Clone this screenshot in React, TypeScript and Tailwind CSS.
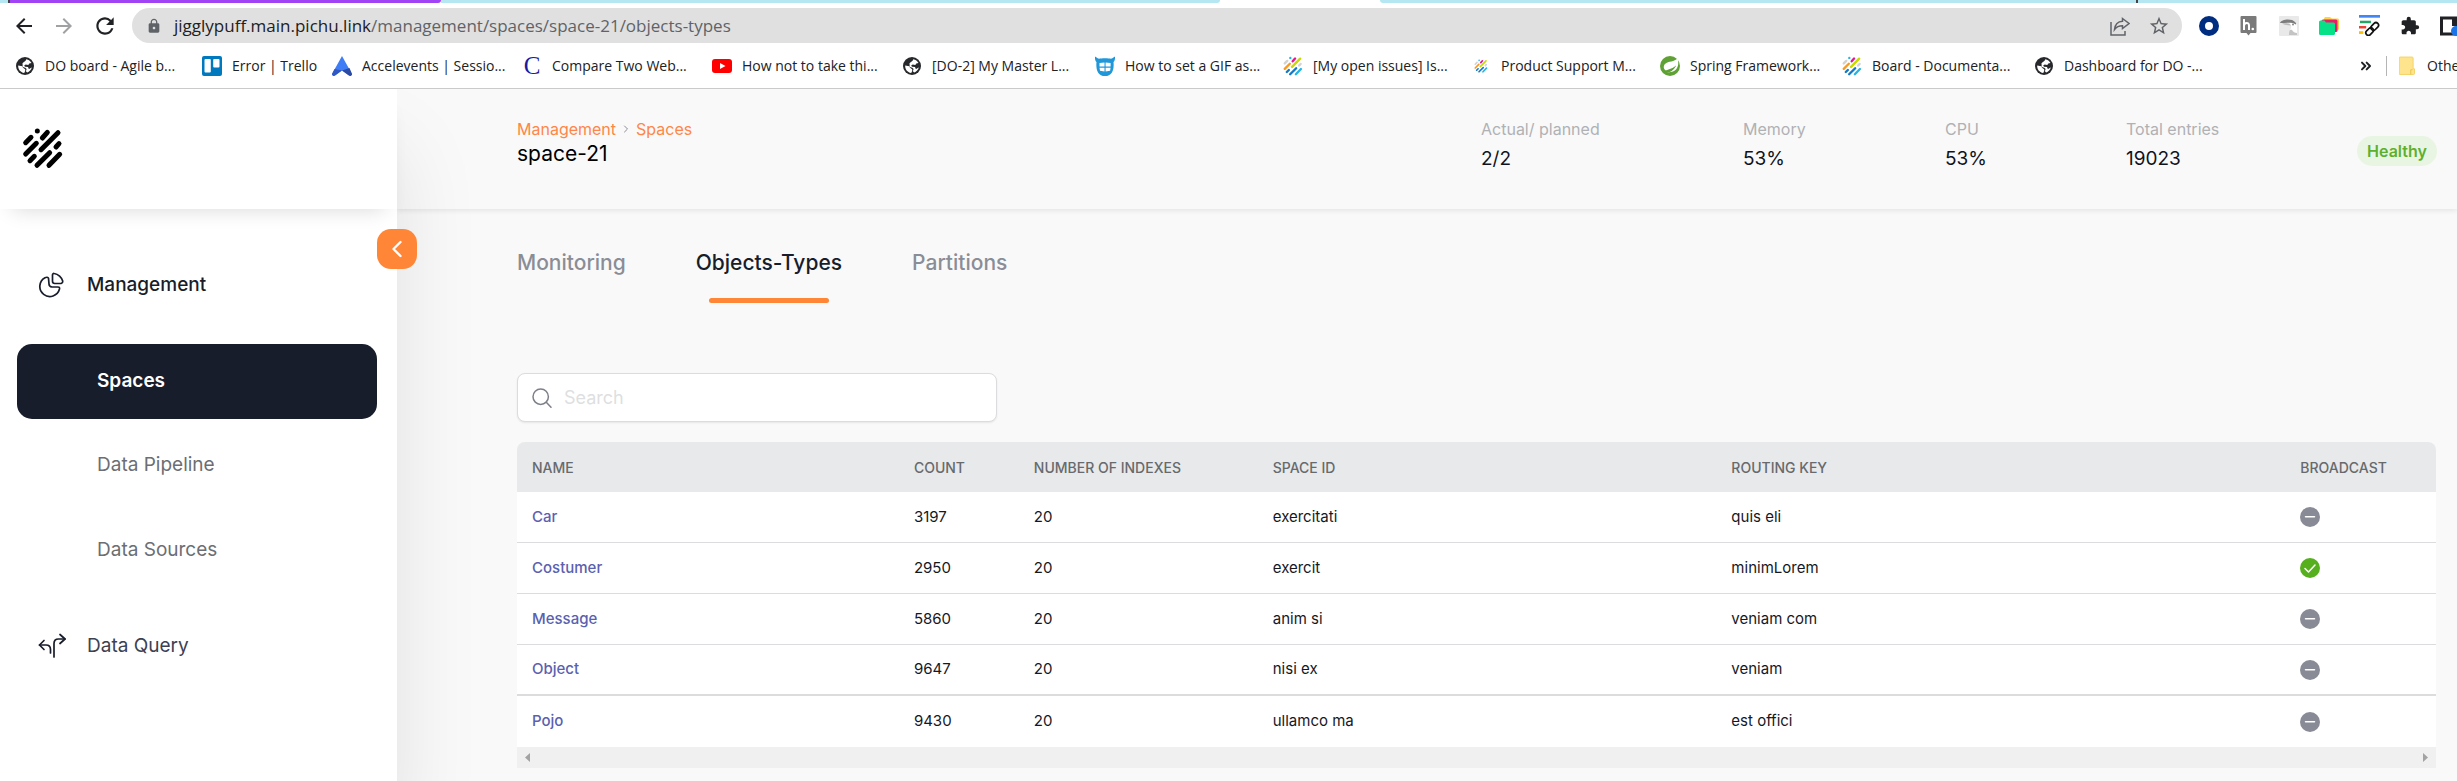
import React from "react";
import { ChevronLeft, ChevronRight, ChevronsRight } from "lucide-react";
import { MdArrowBack, MdArrowForward, MdExtension, MdLock, MdRefresh, MdStarBorder } from "react-icons/md";

const STRIPES = [
  { d: "M112 93h.01", color: "#22b5e8" },
  { d: "M77 128L93 112", color: "#d3d3d3" },
  { d: "M127 114L142 97", color: "#e6168b" },
  { d: "M77 162L109 130", color: "#f79a1f" },
  { d: "M123 149L174 98", color: "#c8d900" },
  { d: "M168 141L177 131", color: "#d3d3d3" },
  { d: "M90 182L103 169", color: "#1479c4" },
  { d: "M111 196L149 158", color: "#1479c4" },
  { d: "M147 196L179 163", color: "#22b5e8" },
];

function StripesLogo({ className, mono = false }: { className: string; mono?: boolean }) {
  return (
    <svg viewBox="66 81 126 126" className={className} fill="none" strokeWidth="15" strokeLinecap="round" aria-hidden="true">
      {STRIPES.map((s) => (
        <path key={s.d} d={s.d} stroke={mono ? "#000000" : s.color} />
      ))}
    </svg>
  );
}

function GlobeIcon() {
  return (
    <svg viewBox="0 0 18 18" className="size-[18px]" aria-hidden="true">
      <circle cx="9" cy="9" r="9" fill="#26282b" />
      <path d="M2.200 8.500c-.4 3.600 2.200 7 6 7.500L9.200 14v-1.800L7 10.700l-.6-1.500z" fill="#fff" />
      <path d="M6.500 6.200C8 4.800 9.500 4.600 10.300 2.200c2.300.4 4.200 1.800 5.200 3.800l-2.200.6-1 1.500-2.600-.5-1.500 1 .8 1.200 3 .3.800 2c1.300-.4 2-1.600 3-1.700-.6 2.300-2.400 4.300-4.600 5.100l-1.300-1.200.7-2.300-1.300-1.300-2.600-.8z" fill="#fff" />
    </svg>
  );
}

function SpringIcon() {
  return (
    <svg viewBox="0 0 20 20" className="size-5" aria-hidden="true">
      <circle cx="10" cy="10" r="10" fill="#5fa134" />
      <path d="M17.500 2c1.500 5 .8 9-1.500 11.500-3 3.300-7.500 2.500-11.500 3.200C9 16.500 14 14 16 9.500 13.500 12.500 9 13 6 14.500 3.500 13.500 3 10 5 8c3.500-3.300 9.500-1.500 12.500-6z" fill="#fff" />
      <path d="M4.500 16.700c5 .3 9.500-2.200 11.500-7.200-3 4-8 4.500-12 6z" fill="#5fa134" />
    </svg>
  );
}

function TrelloIcon() {
  return (
    <svg viewBox="0 0 20 20" className="size-5" aria-hidden="true">
      <rect width="20" height="20" rx="2" fill="#0079bf" />
      <rect x="2.500" y="3" width="6.300" height="13.500" rx="1" fill="#fff" />
      <rect x="11.200" y="3" width="6.300" height="8.500" rx="1" fill="#fff" />
    </svg>
  );
}

function AccelIcon() {
  return (
    <svg viewBox="0 0 20 20" className="size-5" aria-hidden="true">
      <path d="M10 0L20 18c0 1.500-1.500 2.500-3 1.500L10 14.500 3 19.500C1.500 20.500 0 19.500 0 18z" fill="#3f7df6" />
      <path d="M10 14.500L17.500 12 20 18c0 1.500-1.500 2.500-3 1.500z" fill="#2a4aa3" />
      <path d="M10 14.500L2.500 13 0 18c0 1.500 1.500 2.500 3 1.500z" fill="#3058c4" />
    </svg>
  );
}

function YoutubeIcon() {
  return (
    <svg viewBox="0 0 20 20" className="size-5" aria-hidden="true">
      <rect y="3" width="20" height="14" rx="3" fill="#ff0000" />
      <path d="M8 7l5.500 3L8 13z" fill="#fff" />
    </svg>
  );
}

function GifIcon() {
  return (
    <svg viewBox="0 0 20 20" className="size-5" aria-hidden="true">
      <path d="M0 .5c1 .2 2 2 4 2.200C6 2 14 2 16 2.700 18 2.500 19 .7 20 .5c.3 2-.3 4.500-1.500 5.500.8 8-1.500 14-8.500 14S.7 14 1.500 6C.3 5-.3 2.500 0 .5z" fill="#1f97d8" />
      <path d="M4.500 7l5-.6v4.200h-5zM10.600 6.400l5 .6v3.600h-5zM4.500 11.700h5v3.800l-4.500-.7zM10.600 11.700h5l-.5 3.100-4.500.7z" fill="#fff" />
    </svg>
  );
}

function ShareIcon() {
  return (
    <svg viewBox="0 0 20 20" className="size-5" fill="none" stroke="#5f6368" strokeWidth="1.500" aria-hidden="true">
      <path d="M1 6v13h14v-4" />
      <path d="M12.500 2.500l6.500 5-6.500 5V9.800c-3.500 0-6 1-8 3.700.5-4.500 3-8 8-8.300z" />
    </svg>
  );
}

function HypothesisIcon() {
  return (
    <svg viewBox="0 0 20 20" className="size-5" aria-hidden="true">
      <path d="M2.500 0h14a1 1 0 011 1v15a1 1 0 01-1 1h-5l-2 2.500-2-2.500h-5a1 1 0 01-1-1V1a1 1 0 011-1z" fill="#7a7a7a" />
      <path d="M5 3v11M5 9.500c.5-3 5-3.500 5 0V14" stroke="#fff" strokeWidth="2" fill="none" />
      <circle cx="13.800" cy="13" r="1.300" fill="#fff" />
    </svg>
  );
}

function ToucanIcon() {
  return (
    <svg viewBox="0 0 20 20" className="size-5" aria-hidden="true">
      <rect width="20" height="20" rx="1" fill="#e9e9e9" />
      <path d="M10 8c3-3 8-3 8 2v8c-4 1-8-1-7-4 1-2 2-3 .500-5z" fill="#fff" />
      <path d="M1 7c1-4 12-5 15-1 2 2 1 3 0 2-3-2-8-1-15-1z" fill="#7d7d7d" />
      <path d="M3 7.500c4-.5 8-.5 9 2-3-.5-6 0-9-2z" fill="#b9b9b9" />
      <circle cx="14" cy="8.500" r="1" fill="#888" />
      <path d="M10 19c0-5 1-6 3-5 1 2 3 3 5 3v2z" fill="#c4c4c4" />
    </svg>
  );
}

function FoldersIcon() {
  return (
    <svg viewBox="0 0 20 20" className="size-5" aria-hidden="true">
      <path d="M6 1h5l2 1.500h6A1.500 1.500 0 0120 4v8.500a1.500 1.500 0 01-1.500 1.500H5V2.500z" fill="#fbd44c" />
      <rect x="2.500" y="3.500" width="16" height="12.500" rx="1.500" fill="#ec1c64" />
      <path d="M1.500 4.500h4l1.500 2h7.500A1.500 1.500 0 0116 8v9.500a1.500 1.500 0 01-1.500 1.500h-13A1.500 1.500 0 010 17.500V6a1.500 1.500 0 011.500-1.500z" fill="#05e186" />
    </svg>
  );
}

function LinkBarsIcon() {
  return (
    <svg viewBox="0 0 22 22" className="size-[21px]" aria-hidden="true">
      <rect x="0" y="0" width="22" height="2.800" fill="#4285f4" />
      <rect x="1" y="6" width="11.500" height="2.600" fill="#23a566" />
      <rect x="0" y="11.500" width="7.500" height="2.600" fill="#ea4335" />
      <rect x="0" y="17" width="4.500" height="2.800" fill="#fbbc04" />
      <g fill="none" stroke="#111" strokeWidth="1.800" transform="rotate(-45 14 14.500)">
        <rect x="5.500" y="11.800" width="9" height="5.400" rx="2.700" />
        <rect x="13" y="11.800" width="9" height="5.400" rx="2.700" />
      </g>
    </svg>
  );
}

function FolderIcon() {
  return (
    <svg viewBox="0 0 17 20" className="h-5 w-4 shrink-0" aria-hidden="true">
      <path d="M1 .5h13a1 1 0 011 1V13h1.500v5a1 1 0 01-1 1H1a.8.8 0 01-.8-.8V1.300A.8.8 0 011 .5z" fill="#ffe48e" stroke="#f2d264" />
      <path d="M12.500 19v-5h2" fill="none" stroke="#e8c34c" />
    </svg>
  );
}

type Bookmark = { label: string; width: string; icon: React.ReactNode };

const BOOKMARKS: Bookmark[] = [
  { label: "DO board - Agile b...", width: "w-[187px]", icon: <GlobeIcon /> },
  { label: "Error | Trello", width: "w-[130px]", icon: <TrelloIcon /> },
  { label: "Accelevents | Sessio...", width: "w-[190px]", icon: <AccelIcon /> },
  {
    label: "Compare Two Web...",
    width: "w-[190px]",
    icon: <span className="font-['Liberation_Serif',serif] text-[25px] leading-5 text-[#1a1aa0]">C</span>,
  },
  { label: "How not to take thi...", width: "w-[190px]", icon: <YoutubeIcon /> },
  { label: "[DO-2] My Master L...", width: "w-[193px]", icon: <GlobeIcon /> },
  { label: "How to set a GIF as...", width: "w-[188px]", icon: <GifIcon /> },
  { label: "[My open issues] Is...", width: "w-[188px]", icon: <StripesLogo className="size-5" /> },
  { label: "Product Support M...", width: "w-[189px]", icon: <StripesLogo className="size-[14px]" /> },
  { label: "Spring Framework...", width: "w-[182px]", icon: <SpringIcon /> },
  { label: "Board - Documenta...", width: "w-[192px]", icon: <StripesLogo className="size-5" /> },
  { label: "Dashboard for DO -...", width: "w-[187px]", icon: <GlobeIcon /> },
];

function BrowserChrome() {
  return (
    <header className="relative z-20 overflow-hidden border-b border-[#cacaca] bg-white font-['Open_Sans','Noto_Sans',sans-serif] text-[#202124]">
      <div className="flex h-[3px]">
        <div className="w-2 bg-[#b4e7f1]" />
        <div className="w-[433px] rounded-br-sm border-l-2 border-[#444] bg-[#a142f4]" />
        <div className="w-[779px] rounded-br-lg bg-[#b4e7f1]" />
        <div className="w-40" />
        <div className="w-[758px] rounded-bl-lg border-r-2 border-[#444] bg-[#b4e7f1]" />
        <div className="flex-1 bg-[#b4e7f1]" />
      </div>
      <div className="mt-[5px] flex h-[35px] items-center">
        <div className="flex w-[132px] shrink-0 items-center gap-4 pl-3">
          <button aria-label="Back"><MdArrowBack className="size-6" /></button>
          <button aria-label="Forward" className="text-[#a0a1a3]"><MdArrowForward className="size-6" /></button>
          <button aria-label="Reload"><MdRefresh className="size-[26px]" /></button>
        </div>
        <div className="flex h-full flex-1 items-center rounded-full bg-[#e0e0e0] pr-3 pl-[14px]">
          <MdLock className="size-4 shrink-0 text-[#5f6368]" />
          <p className="ml-3 flex-1 text-[17px] whitespace-nowrap text-[#5f6368]">
            <span className="text-[#202124]">jigglypuff.main.pichu.link</span>
            /management/spaces/space-21/objects-types
          </p>
          <div className="flex items-center gap-[18px]">
            <button aria-label="Share"><ShareIcon /></button>
            <button aria-label="Bookmark this page"><MdStarBorder className="size-[22px] text-[#5f6368]" /></button>
          </div>
        </div>
        <div className="flex w-[275px] shrink-0 items-center gap-5 overflow-hidden pl-[17px]">
          <button aria-label="Extension: ring" className="shrink-0">
            <span className="block size-5 rounded-full border-[6px] border-[#002d80]" />
          </button>
          <button aria-label="Extension: notes" className="shrink-0"><HypothesisIcon /></button>
          <button aria-label="Extension: toucan" className="shrink-0"><ToucanIcon /></button>
          <button aria-label="Extension: folders" className="shrink-0"><FoldersIcon /></button>
          <button aria-label="Extension: links" className="shrink-0"><LinkBarsIcon /></button>
          <button aria-label="Extensions" className="shrink-0"><MdExtension className="size-5" /></button>
          <button aria-label="Side panel" className="shrink-0">
            <svg viewBox="0 0 22 20" className="h-5 w-[22px]" aria-hidden="true">
              <path d="M1.500 2h20v16h-20z" fill="none" stroke="#202124" strokeWidth="3" />
              <path d="M12 2h10v8H12z" fill="#202124" />
              <circle cx="16" cy="15" r="5" fill="#1a73e8" />
            </svg>
          </button>
        </div>
      </div>
      <nav aria-label="Bookmarks" className="flex h-[45px] items-center pl-[15px] text-[14px] whitespace-nowrap">
        {BOOKMARKS.map((b) => (
          <a key={b.label} href="#" className={`flex shrink-0 items-center gap-[10px] ${b.width}`}>
            <span className="flex size-5 shrink-0 items-center justify-center">{b.icon}</span>
            {b.label}
          </a>
        ))}
        <button aria-label="More bookmarks" className="ml-auto"><ChevronsRight className="size-4" strokeWidth={3} /></button>
        <div className="ml-3 h-5 w-px shrink-0 bg-[#b5b5b5]" />
        <a href="#" className="ml-3 flex w-[58px] items-center gap-3">
          <FolderIcon />
          Othe
        </a>
      </nav>
    </header>
  );
}

function ManagementIcon() {
  return (
    <svg viewBox="0 0 26 26" className="size-[26px]" fill="none" stroke="#181d2b" strokeWidth="1.700" strokeLinejoin="round" aria-hidden="true">
      <path d="M10.500 6.300C10 5 8.500 5 7 5.700A10 10 0 1021.500 17c.3-1.500-.5-2-1.500-2h-6c-2-.3-3-1.500-3-3z" />
      <path d="M14.500 3c0-1 .7-1.700 1.700-1.500 4 .5 7.500 4 8.500 7.500.4 1.500-1 2.500-3 2.500h-5c-1.500 0-2.200-1-2.200-2.200z" />
    </svg>
  );
}

function QueryIcon() {
  return (
    <svg viewBox="0 0 28 26" className="h-[26px] w-7" fill="none" stroke="#181d2b" strokeWidth="1.700" strokeLinecap="round" strokeLinejoin="round" aria-hidden="true">
      <path d="M12.500 20v-3.500c0-3-1.500-4.500-4.500-4.500H1.500" />
      <path d="M6 7.500L1.500 12l4.500 4.500" />
      <path d="M16 24V10.500C16 7.500 17.500 6 20.500 6H27" />
      <path d="M22 1.500L27 6l-5 4.500" />
    </svg>
  );
}

function Sidebar() {
  return (
    <aside className="relative z-10 w-[397px] shrink-0 bg-white text-[19px] text-[#6b6e73] shadow-[0_60px_80px_rgba(0,0,0,0.1)]">
      <div className="h-[120px] pt-[38px] pl-[22px] shadow-[0_12px_20px_-12px_rgba(0,0,0,0.16)]">
        <a href="#" aria-label="Home" className="block size-[42px]"><StripesLogo mono className="size-[42px]" /></a>
      </div>
      <button
        aria-label="Collapse sidebar"
        className="absolute top-[140px] -right-5 flex size-10 items-center justify-center rounded-[14px] bg-[#ff8636] text-white"
      >
        <ChevronLeft className="size-7" />
      </button>
      <nav aria-label="Main" className="pt-[59px]">
        <a href="#" className="flex h-[34px] items-center pl-[38px] font-medium text-[#181d2b]">
          <span className="w-[49px] shrink-0"><ManagementIcon /></span>
          <span>Management</span>
        </a>
        <div className="mt-[42px] mr-5 ml-[17px]">
          <a href="#" aria-current="page" className="flex h-[75px] items-center rounded-[15px] bg-[#181d2b] pl-20 font-semibold text-white">Spaces</a>
          <a href="#" className="mt-1 flex h-[85px] items-center pl-20">Data Pipeline</a>
          <a href="#" className="flex h-[85px] items-center pl-20">Data Sources</a>
        </div>
        <a href="#" className="mt-9 flex h-[34px] items-center pl-[38px] text-[#3c4152]">
          <span className="w-[49px] shrink-0"><QueryIcon /></span>
          <span>Data Query</span>
        </a>
      </nav>
    </aside>
  );
}

const STATS = [
  { label: "Actual/ planned", value: "2/2", width: "w-[262px]" },
  { label: "Memory", value: "53%", width: "w-[202px]" },
  { label: "CPU", value: "53%", width: "w-[181px]" },
  { label: "Total entries", value: "19023", width: "w-[231px]" },
];

function SpaceHeader() {
  return (
    <div className="flex h-[120px] justify-between pt-[29px] pr-5 pl-[120px] text-[16px] shadow-[0_2px_5px_rgba(0,0,0,0.08)]">
      <div>
        <nav aria-label="Breadcrumb" className="flex h-[22px] items-center gap-1 text-[#ff8648]">
          <a href="#">Management</a>
          <ChevronRight className="size-3 text-[#8b8d93]" />
          <a href="#">Spaces</a>
        </nav>
        <h1 className="text-[21px] leading-7 text-black">space-21</h1>
      </div>
      <div className="flex">
        <dl className="flex">
          {STATS.map((s) => (
            <div key={s.label} className={s.width}>
              <dt className="leading-[22px] text-[#b0b1b5]">{s.label}</dt>
              <dd className="mt-[3px] text-[19px] leading-8 text-[#10131c]">{s.value}</dd>
            </div>
          ))}
        </dl>
        <span className="mt-[18px] flex h-[30px] w-20 items-center justify-center rounded-full bg-[#e9f5e3] font-semibold text-[#5cb030]">Healthy</span>
      </div>
    </div>
  );
}

type Row = { name: string; count: number; indexes: number; spaceId: string; routingKey: string; broadcast: boolean };

const ROWS: Row[] = [
  { name: "Car", count: 3197, indexes: 20, spaceId: "exercitati", routingKey: "quis eli", broadcast: false },
  { name: "Costumer", count: 2950, indexes: 20, spaceId: "exercit", routingKey: "minimLorem", broadcast: true },
  { name: "Message", count: 5860, indexes: 20, spaceId: "anim si", routingKey: "veniam com", broadcast: false },
  { name: "Object", count: 9647, indexes: 20, spaceId: "nisi ex", routingKey: "veniam", broadcast: false },
  { name: "Pojo", count: 9430, indexes: 20, spaceId: "ullamco ma", routingKey: "est offici", broadcast: false },
];

const HEADINGS = ["NAME", "COUNT", "NUMBER OF INDEXES", "SPACE ID", "ROUTING KEY", "BROADCAST"];

function BroadcastIcon({ on }: { on: boolean }) {
  return (
    <svg viewBox="0 0 20 20" className="size-5" role="img" aria-label={on ? "Yes" : "No"}>
      <circle cx="10" cy="10" r="10" fill={on ? "#56b01e" : "#888b95"} />
      <path d={on ? "M5 10.500l3.500 3.500L15 7" : "M5.500 9.800h9"} fill="none" stroke="#fff" strokeWidth="1.500" strokeLinecap="round" strokeLinejoin="round" />
    </svg>
  );
}

function ObjectTypesTable() {
  return (
    <div>
      <table className="w-full table-fixed border-separate border-spacing-0 text-left text-[15px]">
        <colgroup>
          <col className="w-[19.9%]" />
          <col className="w-[6.25%]" />
          <col className="w-[12.45%]" />
          <col className="w-[23.9%]" />
          <col className="w-[29.65%]" />
          <col className="w-[7.85%]" />
        </colgroup>
        <thead>
          <tr className="h-[50px] text-[14px] text-[#67696d]">
            {HEADINGS.map((h) => (
              <th key={h} scope="col" className="bg-[#e8e9ea] pl-[15px] font-medium whitespace-nowrap first:rounded-tl-lg last:rounded-tr-lg">{h}</th>
            ))}
          </tr>
        </thead>
        <tbody className="text-[#16181f] [&_td]:border-b [&_td]:border-[#dcdcde] [&_td]:bg-white [&_td]:pl-[15px] [&>tr:last-child>td]:border-b-0 [&>tr:nth-child(4)>td]:border-b-2">
          {ROWS.map((r) => (
            <tr key={r.name} className="h-[51px]">
              <td><a href="#" className="font-medium text-[#5a61b0]">{r.name}</a></td>
              <td>{r.count}</td>
              <td>{r.indexes}</td>
              <td>{r.spaceId}</td>
              <td>{r.routingKey}</td>
              <td><BroadcastIcon on={r.broadcast} /></td>
            </tr>
          ))}
        </tbody>
      </table>
      <div className="flex h-[21px] items-center justify-between bg-[#f0f0f0] px-2">
        <button aria-label="Scroll left">
          <svg viewBox="0 0 5 9" className="h-[9px] w-[5px]" fill="#a3a3a3" aria-hidden="true"><path d="M5 0v9L0 4.500z" /></svg>
        </button>
        <button aria-label="Scroll right">
          <svg viewBox="0 0 5 9" className="h-[9px] w-[5px]" fill="#a3a3a3" aria-hidden="true"><path d="M0 0v9l5-4.500z" /></svg>
        </button>
      </div>
    </div>
  );
}

function Content() {
  return (
    <div className="pt-9 pr-[21px] pl-[120px]">
      <div role="tablist" className="flex gap-[70px] text-[21px] leading-9 font-medium text-[#8a8d96]">
        <button role="tab" aria-selected="false" className="self-start">Monitoring</button>
        <button role="tab" aria-selected="true" className="flex flex-col items-center text-[#181d2b]">
          Objects-Types
          <span className="mt-[17px] h-[5px] w-[120px] rounded-full bg-[#ff8636]" />
        </button>
        <button role="tab" aria-selected="false" className="self-start">Partitions</button>
      </div>
      <label className="mt-[70px] flex h-[49px] w-[480px] items-center gap-3 rounded-lg border border-[#dcdcde] bg-white px-[14px] shadow-[0_1px_2px_rgba(0,0,0,0.08)]">
        <svg viewBox="0 0 20 20" className="size-5 shrink-0" fill="none" stroke="#7d8088" strokeWidth="1.500" strokeLinecap="round" aria-hidden="true">
          <circle cx="8.700" cy="8.700" r="7.700" />
          <path d="M14.300 14.300l4.700 5" />
        </svg>
        <input type="text" aria-label="Search" placeholder="Search" className="w-full text-[18px] outline-none placeholder:text-[#dedfe1]" />
      </label>
      <div className="mt-5"><ObjectTypesTable /></div>
    </div>
  );
}

export default function App() {
  return (
    <div className="flex min-h-screen flex-col overflow-hidden bg-[#f9f9f9] font-['Inter',sans-serif]">
      <BrowserChrome />
      <div className="flex flex-1">
        <Sidebar />
        <main className="min-w-0 flex-1">
          <SpaceHeader />
          <Content />
        </main>
      </div>
    </div>
  );
}
